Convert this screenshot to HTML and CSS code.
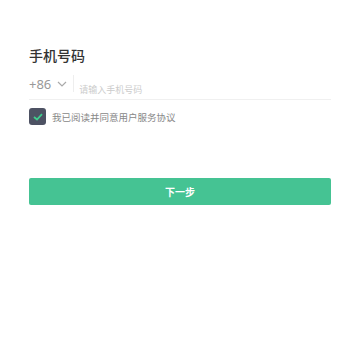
FILE: index.html
```html
<!DOCTYPE html>
<html lang="zh-CN">

<head>
    <meta charset="UTF-8">
    <meta name="viewport" content="width=device-width, initial-scale=1.0">
    <title>手机号码</title>
    <link rel="stylesheet" href="styles.css">
</head>

<body>
    <div class="page">
        <div class="title">手机号码</div>
        <div class="phone-row">
            <div class="code">
                +86
                <svg class="chevron" width="10" height="6" viewBox="0 0 10 6">
                    <path d="M1 1 L5 5 L9 1" fill="none" stroke="#aaa" stroke-width="1.2" />
                </svg>
            </div>
            <div class="divider"></div>
            <input class="phone" type="text" placeholder="请输入手机号码">
        </div>
        <label class="agree">
            <span class="box">
                <svg width="10" height="8" viewBox="0 0 10 8">
                    <path d="M1 4 L4 6.5 L9 1.2" fill="none" stroke="#3fcf8e" stroke-width="1.8" />
                </svg>
            </span>
            我已阅读并同意用户服务协议
        </label>
        <button type="button" class="next">下一步</button>
    </div>
</body>

</html>
```

FILE: styles.css
```css
body {
    margin: 0;
    background-color: white;
    font-family: "Noto Sans CJK SC", "Noto Sans", sans-serif;
}

.page {
    padding: 45px 29px 0;
}

.title {
    font-size: 14px;
    line-height: 20px;
    font-weight: 500;
    color: #333;
}

.phone-row {
    display: flex;
    align-items: center;
    height: 26px;
    margin-top: 8px;
    border-bottom: 1px solid #f0f0f0;
}

.code {
    display: flex;
    align-items: center;
    margin-bottom: 5px;
    font-family: "Noto Sans", sans-serif;
    font-size: 13px;
    color: #999;
}

.chevron {
    margin-left: 6px;
}

.divider {
    width: 1px;
    height: 17px;
    margin: 0 0 5px 6px;
    background-color: #eee;
}

.phone {
    flex: 1;
    border: none;
    outline: none;
    margin: 6px 0 0 5px;
    padding: 0;
    font-family: "Noto Sans CJK SC", sans-serif;
    font-size: 9px;
}

.phone::placeholder {
    color: #ccc;
}

.agree {
    display: flex;
    align-items: center;
    margin-top: 8px;
    font-size: 9.5px;
    color: #888;
}

.box {
    display: flex;
    align-items: center;
    justify-content: center;
    width: 17px;
    height: 17px;
    margin-right: 6px;
    border-radius: 3px;
    background-color: #4d5263;
}

.next {
    display: block;
    width: 100%;
    height: 27px;
    margin-top: 53px;
    border: none;
    border-radius: 2px;
    background-color: #45c393;
    color: white;
    font-family: "Noto Sans CJK SC", sans-serif;
    font-size: 10px;
    font-weight: 700;
}
```
